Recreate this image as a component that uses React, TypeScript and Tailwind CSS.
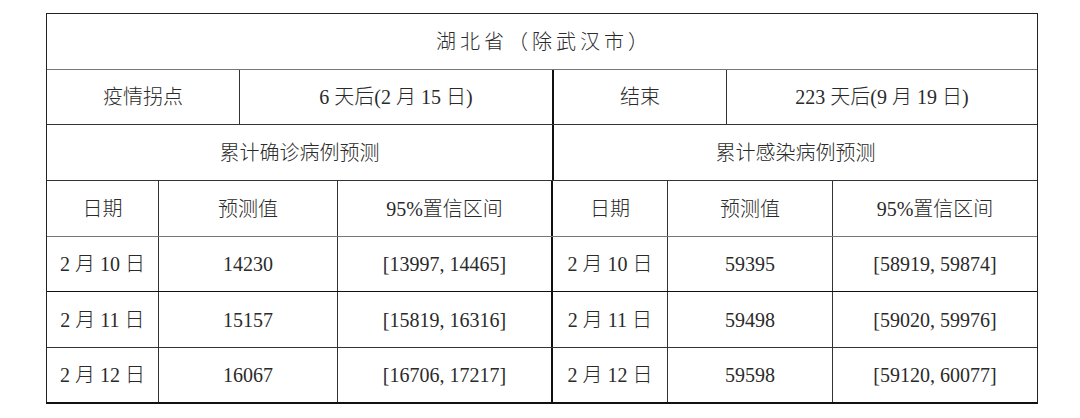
import React from "react";

const font = { fontFamily: '"Liberation Serif", "Noto Sans CJK SC", serif' };

function Cell({ w, children, left = true, thick = false, grow = false }: { w?: string; children: React.ReactNode; left?: boolean; thick?: boolean; grow?: boolean }) {
  return (
    <div
      className={
        "flex items-center justify-center h-full " +
        (grow ? "flex-1 " : "shrink-0 ") +
        (w ?? "") +
        (left ? (thick ? " border-l-2 border-[#111]" : " border-l border-[#333]") : "")
      }
    >
      {children}
    </div>
  );
}

const rows = [
  ["2 月 10 日", "14230", "[13997, 14465]", "2 月 10 日", "59395", "[58919, 59874]"],
  ["2 月 11 日", "15157", "[15819, 16316]", "2 月 11 日", "59498", "[59020, 59976]"],
  ["2 月 12 日", "16067", "[16706, 17217]", "2 月 12 日", "59598", "[59120, 60077]"],
];

function DataRow({ cells, h, top }: { cells: string[]; h: string; top: string }) {
  return (
    <div className={"flex border-t " + top + " " + h}>
      <Cell w="w-[111px]" left={false}>{cells[0]}</Cell>
      <Cell w="w-[179px]">{cells[1]}</Cell>
      <Cell w="w-[214px]">{cells[2]}</Cell>
      <Cell w="w-[116px]" thick>{cells[3]}</Cell>
      <Cell w="w-[165px]">{cells[4]}</Cell>
      <Cell grow>{cells[5]}</Cell>
    </div>
  );
}

export default function App() {
  return (
    <div className="w-[1080px] h-[418px] bg-white pt-[13px] pl-[46px]" style={font}>
      <div className="w-[992px] border border-[#222] border-b-2 border-b-[#111] text-[20px] leading-none font-light text-[#2a2a2a]">
        <div className="flex h-[55px] items-center justify-center tracking-[4px] pl-[4px]">湖北省（除武汉市）</div>
        <div className="flex h-[55px] border-t border-[#777]">
          <Cell w="w-[192px]" left={false}>疫情拐点</Cell>
          <Cell w="w-[313px]">6 天后(2 月 15 日)</Cell>
          <Cell w="w-[174px]" thick>结束</Cell>
          <Cell grow>223 天后(9 月 19 日)</Cell>
        </div>
        <div className="flex h-[56px] border-t border-[#333]">
          <Cell w="w-[505px]" left={false}>累计确诊病例预测</Cell>
          <Cell grow thick>累计感染病例预测</Cell>
        </div>
        <DataRow cells={["日期", "预测值", "95%置信区间", "日期", "预测值", "95%置信区间"]} h="h-[56px]" top="border-[#333]" />
        <DataRow cells={rows[0]} h="h-[55px]" top="border-[#777]" />
        <DataRow cells={rows[1]} h="h-[56px]" top="border-[#111]" />
        <DataRow cells={rows[2]} h="h-[55px]" top="border-[#333]" />
      </div>
    </div>
  );
}
